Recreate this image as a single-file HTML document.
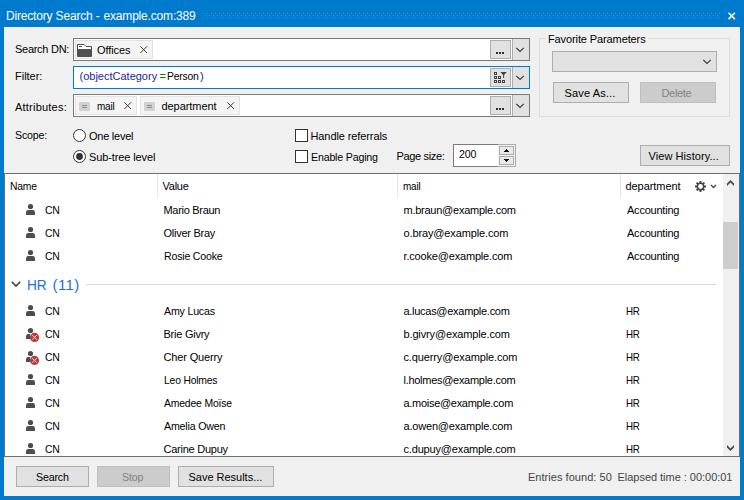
<!DOCTYPE html>
<html><head><meta charset="utf-8"><title>Directory Search - example.com:389</title>
<style>
html,body{margin:0;padding:0;}
body{width:744px;height:500px;overflow:hidden;background:#007acc;position:relative;font-family:"Liberation Sans",sans-serif;font-size:11px;color:#000;}
div,svg{position:absolute;box-sizing:border-box;}
.t{white-space:pre;line-height:13px;height:13px;}
.ic{overflow:visible}
#dots{left:203px;top:13px;width:517px;height:5px;}
#content{left:4px;top:27px;width:736px;height:469px;background:#f0f0f0;}
.box{background:#fff;border:1px solid #7a7a7a;}
.btn{background:#e1e1e1;border:1px solid #adadad;}
.btn.dis{background:#cccccc;border-color:#bfbfbf;color:#838383;}
.tok{background:#f4f4f4;border:1px solid #e2e2e2;height:19px;top:1px;}
.dd{background:#e1e1e1;border-left:1px solid #adadad;width:17px;height:21px;top:0;right:0;}
.sep{width:1px;background:#e5e5e5;top:0;height:24px;}
</style></head><body>
<div class="t " style="left:6px;top:9px;letter-spacing:-0.176px;font-size:12px;line-height:15px;height:15px;color:#fff;">Directory Search -</div>
<div class="t " style="left:103.5px;top:9px;letter-spacing:-0.179px;font-size:12px;line-height:15px;height:15px;color:#fff;">example.com:389</div>
<svg id="dots" width="517" height="5" viewBox="0 0 517 5"><defs><pattern id="dp" x="0" y="0" width="4" height="4" patternUnits="userSpaceOnUse"><rect x="0" y="0" width="1" height="1" fill="#00aaff"/><rect x="2" y="2" width="1" height="1" fill="#00aaff"/></pattern></defs><rect x="0" y="0" width="517" height="5" fill="url(#dp)"/></svg>
<svg style="left:728px;top:12px" width="8" height="8" viewBox="0 0 8 8"><path d="M0.5 0.7L6.9 7.1M6.9 0.7L0.5 7.1" stroke="#fff" stroke-width="1.5" fill="none"/></svg>
<div id="content">
<div class="t " style="left:11px;top:16px;letter-spacing:-0.278px;">Search DN:</div>
<div class="t " style="left:11px;top:43px;letter-spacing:-0.017px;">Filter:</div>
<div class="t " style="left:11px;top:74px;letter-spacing:0.22px;">Attributes:</div>
<div class="t " style="left:11px;top:102px;letter-spacing:-0.2px;transform:scaleX(0.967);transform-origin:0px 0;">Scope:</div>

<!-- Search DN box -->
<div class="box" style="left:69px;top:11px;width:457px;height:23px;">
  <div class="tok" style="left:1px;width:78px;">
    <svg style="left:1px;top:3px" width="16" height="14" viewBox="0 0 16 14"><path d="M0.5 0.5H7L9 2.5H14.5V12.5H0.5Z" fill="#fff" stroke="#505050" stroke-width="1"/><rect x="1" y="5" width="13" height="7.5" fill="#505050"/><rect x="2" y="2" width="3" height="1" fill="#505050"/></svg>
    <div class="t " style="left:21px;top:3px;letter-spacing:-0.083px;">Offices</div>
    <svg style="left:64px;top:5px" width="8" height="8" viewBox="0 0 8 8"><path d="M0.3 0.3L7 7M7 0.3L0.3 7" stroke="#3c3c3c" stroke-width="1" fill="none"/></svg>
  </div>
  <div class="btn" style="left:416px;top:1px;width:21px;height:19px;"><svg style="left:5px;top:11px" width="8" height="2"><rect x="0" y="0" width="2" height="2" fill="#2b2b2b"/><rect x="3" y="0" width="2" height="2" fill="#2b2b2b"/><rect x="6" y="0" width="2" height="2" fill="#2b2b2b"/></svg></div>
  <div class="dd"><svg style="left:3px;top:8px" width="10" height="6" viewBox="0 0 10 6"><path d="M0.3 0.9L4.05 4.5L7.8 0.9" stroke="#3a3a3a" stroke-width="1.15" fill="none"/></svg></div>
</div>

<!-- Filter box -->
<div class="box" style="left:69px;top:39px;width:457px;height:23px;border-color:#0078d7;">
  <div class="t " style="left:5.5px;top:3px;color:#2222aa;">(objectCategory</div>
  <div class="t " style="left:85.5px;top:3px;color:#008000;">=</div>
  <div class="t " style="left:93px;top:3px;letter-spacing:-0.2px;transform:scaleX(0.938);transform-origin:0px 0;">Person</div>
  <div class="t " style="left:126px;top:3px;color:#2222aa;">)</div>
  <div class="btn" style="left:416px;top:1px;width:21px;height:19px;"><svg style="left:3px;top:3px" width="14" height="12" viewBox="0 0 14 12"><g fill="none" stroke="#404040" stroke-width="1" shape-rendering="crispEdges"><rect x="0.5" y="0.5" width="2" height="2"/><rect x="0.5" y="4.5" width="2" height="2"/><rect x="4.5" y="4.5" width="2" height="2"/><rect x="0.5" y="8.5" width="2" height="2"/><rect x="4.5" y="8.5" width="2" height="2"/><rect x="8.5" y="8.5" width="2" height="2"/></g><path d="M6.5 0H12.7L10.1 3V6H9.1V3Z" fill="#404040"/></svg></div>
  <div class="dd"><svg style="left:3px;top:8px" width="10" height="6" viewBox="0 0 10 6"><path d="M0.3 0.9L4.05 4.5L7.8 0.9" stroke="#3a3a3a" stroke-width="1.15" fill="none"/></svg></div>
</div>

<!-- Attributes box -->
<div class="box" style="left:69px;top:67px;width:457px;height:23px;">
  <div class="tok" style="left:1px;width:62px;">
    <svg style="left:3px;top:5px" width="11" height="9" viewBox="0 0 11 9"><rect x="0" y="0" width="11" height="9" rx="1" fill="#d2d2d2"/><path d="M3 3.5H8M3 5.5H8" stroke="#8c8c8c" stroke-width="1"/></svg>
    <div class="t " style="left:21px;top:3px;letter-spacing:-0.2px;transform:scaleX(0.902);transform-origin:0px 0;">mail</div>
    <svg style="left:48px;top:5px" width="8" height="8" viewBox="0 0 8 8"><path d="M0.3 0.3L7 7M7 0.3L0.3 7" stroke="#3c3c3c" stroke-width="1" fill="none"/></svg>
  </div>
  <div class="tok" style="left:66px;width:100px;">
    <svg style="left:3px;top:5px" width="11" height="9" viewBox="0 0 11 9"><rect x="0" y="0" width="11" height="9" rx="1" fill="#d2d2d2"/><path d="M3 3.5H8M3 5.5H8" stroke="#8c8c8c" stroke-width="1"/></svg>
    <div class="t " style="left:20.5px;top:3px;letter-spacing:-0.056px;">department</div>
    <svg style="left:86px;top:5px" width="8" height="8" viewBox="0 0 8 8"><path d="M0.3 0.3L7 7M7 0.3L0.3 7" stroke="#3c3c3c" stroke-width="1" fill="none"/></svg>
  </div>
  <div class="btn" style="left:416px;top:1px;width:21px;height:19px;"><svg style="left:5px;top:11px" width="8" height="2"><rect x="0" y="0" width="2" height="2" fill="#2b2b2b"/><rect x="3" y="0" width="2" height="2" fill="#2b2b2b"/><rect x="6" y="0" width="2" height="2" fill="#2b2b2b"/></svg></div>
  <div class="dd"><svg style="left:3px;top:8px" width="10" height="6" viewBox="0 0 10 6"><path d="M0.3 0.9L4.05 4.5L7.8 0.9" stroke="#3a3a3a" stroke-width="1.15" fill="none"/></svg></div>
</div>

<!-- Favorite parameters group -->
<div style="left:535px;top:11px;width:191px;height:79px;border:1px solid #dcdcdc;"></div>
<div style="left:542px;top:8px;width:102px;height:8px;background:#f0f0f0;"></div>
<div class="t " style="left:544px;top:6px;letter-spacing:-0.111px;">Favorite Parameters</div>
<div class="btn" style="left:548px;top:24px;width:165px;height:21px;"><svg style="left:150px;top:7px" width="10" height="6" viewBox="0 0 10 6"><path d="M0.3 0.9L4.05 4.5L7.8 0.9" stroke="#3a3a3a" stroke-width="1.15" fill="none"/></svg></div>
<div class="btn" style="left:549px;top:55px;width:76px;height:21px;"><div class="t " style="left:10.5px;top:4px;letter-spacing:0.144px;">Save As...</div></div>
<div class="btn dis" style="left:636px;top:55px;width:76px;height:21px;"><div class="t " style="left:20.5px;top:4px;letter-spacing:-0.32px;">Delete</div></div>

<!-- Scope radios -->
<svg style="left:69px;top:102px" width="13" height="13" viewBox="0 0 13 13"><circle cx="6.5" cy="6.5" r="6" fill="#fff" stroke="#333" stroke-width="1"/></svg>
<div class="t " style="left:85px;top:103px;letter-spacing:-0.25px;">One level</div>
<svg style="left:69px;top:123px" width="13" height="13" viewBox="0 0 13 13"><circle cx="6.5" cy="6.5" r="6" fill="#fff" stroke="#333" stroke-width="1"/><circle cx="6.5" cy="6.5" r="3.4" fill="#333"/></svg>
<div class="t " style="left:85px;top:124px;letter-spacing:-0.108px;">Sub-tree level</div>

<!-- Checkboxes -->
<div style="left:291px;top:102px;width:13px;height:13px;background:#fff;border:1px solid #333;"></div>
<div class="t " style="left:306.5px;top:103px;letter-spacing:-0.1px;">Handle referrals</div>
<div style="left:291px;top:123px;width:13px;height:13px;background:#fff;border:1px solid #333;"></div>
<div class="t " style="left:306.5px;top:124px;letter-spacing:-0.2px;transform:scaleX(0.969);transform-origin:0px 0;">Enable Paging</div>
<div class="t " style="left:392.5px;top:123px;letter-spacing:-0.333px;">Page size:</div>
<div class="box" style="left:449px;top:117px;width:45px;height:23px;border-right:none;">
  <div class="t " style="left:5px;top:3px;letter-spacing:-0.2px;transform:scaleX(0.966);transform-origin:0px 0;">200</div>
</div>
<div style="left:494px;top:117px;width:18px;height:23px;background:#f0f0f0;border:1px solid #adadad;border-left:none;">
  <div class="btn" style="left:1px;top:1px;width:15px;height:9px;background:#e9e9e9;"><svg style="left:4px;top:2px" width="5" height="3" viewBox="0 0 5 3" shape-rendering="crispEdges"><path d="M2 0H3V1H4V2H5V3H0V2H1V1H2Z" fill="#111"/></svg></div>
  <div class="btn" style="left:1px;top:11px;width:15px;height:9px;background:#e9e9e9;"><svg style="left:4px;top:2px" width="5" height="3" viewBox="0 0 5 3" shape-rendering="crispEdges"><path d="M0 0H5V1H4V2H3V3H2V2H1V1H0Z" fill="#111"/></svg></div>
</div>
<div class="btn" style="left:636px;top:118px;width:90px;height:21px;"><div class="t " style="left:7.5px;top:4px;letter-spacing:0.071px;">View History...</div></div>

<!-- Grid -->
<div id="grid" style="left:0px;top:146px;width:736px;height:284px;background:#fff;border:1px solid #6e6e6e;overflow:hidden;">
  <div class="t " style="left:4.5px;top:6px;letter-spacing:-0.2px;transform:scaleX(0.94);transform-origin:0px 0;">Name</div>
  <div class="t " style="left:157.5px;top:6px;letter-spacing:-0.25px;">Value</div>
  <div class="t " style="left:398px;top:6px;letter-spacing:-0.2px;transform:scaleX(0.902);transform-origin:0px 0;">mail</div>
  <div class="t " style="left:620.5px;top:6px;letter-spacing:-0.056px;">department</div>
  <div class="sep" style="left:152px"></div>
  <div class="sep" style="left:392px"></div>
  <div class="sep" style="left:615px"></div>
  <svg style="left:690px;top:7px" width="11" height="11" viewBox="-5.5 -5.5 11 11"><g fill="#444"><circle r="3.9"/><rect x="-1" y="-5.5" width="2" height="11"/><rect x="-1" y="-5.5" width="2" height="11" transform="rotate(45)"/><rect x="-1" y="-5.5" width="2" height="11" transform="rotate(90)"/><rect x="-1" y="-5.5" width="2" height="11" transform="rotate(135)"/></g><circle r="2.4" fill="#fff"/></svg>
  <svg class="ic" style="left:706px;top:11px" width="5" height="3" viewBox="0 0 5 3"><path d="M0.5 0.5L2.5 2.5L4.5 0.5" stroke="#444" stroke-width="1.3" stroke-linecap="square" fill="none"/></svg>
  <svg style="left:6px;top:107px" width="10" height="7" viewBox="0 0 10 7"><path d="M0.8 0.8L5 5L9.2 0.8" stroke="#404040" stroke-width="1.6" fill="none"/></svg>
  <div class="t " style="left:22px;top:102px;letter-spacing:-0.2px;transform:scaleX(0.909);transform-origin:1px 0;font-size:15px;line-height:18px;height:18px;color:#1e6fd9;">HR</div>
  <div class="t " style="left:47.5px;top:102px;letter-spacing:0.4px;font-size:15px;line-height:18px;height:18px;color:#1e6fd9;">(11)</div>
  <div style="left:81px;top:110px;width:630px;height:1px;background:#d2daee;"></div>
<svg class="ic" style="left:19px;top:28px" width="16" height="16" viewBox="0 0 16 16"><circle cx="6.5" cy="4.5" r="2.6" fill="#4d4d4d"/><path d="M2 13V10.4Q2 8 4.4 8H8.6Q11 8 11 10.4V13Z" fill="#4d4d4d"/></svg>
<div class="t " style="left:39.5px;top:30px;letter-spacing:-0.2px;transform:scaleX(0.946);transform-origin:0px 0;">CN</div>
<div class="t " style="left:158.5px;top:30px;letter-spacing:-0.3px;">Mario Braun</div>
<div class="t " style="left:398.5px;top:30px;letter-spacing:-0.25px;">m.braun@example.com</div>
<div class="t " style="left:622px;top:30px;letter-spacing:-0.222px;">Accounting</div>
<svg class="ic" style="left:19px;top:51px" width="16" height="16" viewBox="0 0 16 16"><circle cx="6.5" cy="4.5" r="2.6" fill="#4d4d4d"/><path d="M2 13V10.4Q2 8 4.4 8H8.6Q11 8 11 10.4V13Z" fill="#4d4d4d"/></svg>
<div class="t " style="left:39.5px;top:53px;letter-spacing:-0.2px;transform:scaleX(0.946);transform-origin:0px 0;">CN</div>
<div class="t " style="left:158.5px;top:53px;letter-spacing:-0.26px;">Oliver Bray</div>
<div class="t " style="left:398.5px;top:53px;letter-spacing:-0.129px;">o.bray@example.com</div>
<div class="t " style="left:622px;top:53px;letter-spacing:-0.222px;">Accounting</div>
<svg class="ic" style="left:19px;top:74px" width="16" height="16" viewBox="0 0 16 16"><circle cx="6.5" cy="4.5" r="2.6" fill="#4d4d4d"/><path d="M2 13V10.4Q2 8 4.4 8H8.6Q11 8 11 10.4V13Z" fill="#4d4d4d"/></svg>
<div class="t " style="left:39.5px;top:76px;letter-spacing:-0.2px;transform:scaleX(0.946);transform-origin:0px 0;">CN</div>
<div class="t " style="left:158.5px;top:76px;letter-spacing:-0.2px;transform:scaleX(0.961);transform-origin:0px 0;">Rosie Cooke</div>
<div class="t " style="left:398.5px;top:76px;letter-spacing:-0.178px;">r.cooke@example.com</div>
<div class="t " style="left:622px;top:76px;letter-spacing:-0.222px;">Accounting</div>
<svg class="ic" style="left:19px;top:129px" width="16" height="16" viewBox="0 0 16 16"><circle cx="6.5" cy="4.5" r="2.6" fill="#4d4d4d"/><path d="M2 13V10.4Q2 8 4.4 8H8.6Q11 8 11 10.4V13Z" fill="#4d4d4d"/></svg>
<div class="t " style="left:39.5px;top:131px;letter-spacing:-0.2px;transform:scaleX(0.946);transform-origin:0px 0;">CN</div>
<div class="t " style="left:158.5px;top:131px;letter-spacing:-0.2px;transform:scaleX(0.966);transform-origin:0px 0;">Amy Lucas</div>
<div class="t " style="left:398.5px;top:131px;letter-spacing:-0.283px;">a.lucas@example.com</div>
<div class="t " style="left:621px;top:131px;letter-spacing:-0.2px;transform:scaleX(0.886);transform-origin:0px 0;">HR</div>
<svg class="ic" style="left:19px;top:152px" width="16" height="16" viewBox="0 0 16 16"><circle cx="6.5" cy="4.5" r="2.6" fill="#4d4d4d"/><path d="M2 13V10.4Q2 8 4.4 8H6V13Z" fill="#4d4d4d"/><circle cx="10.5" cy="11.4" r="4.6" fill="#bb3a3a"/><path d="M8.3 9.2L12.7 13.6M12.7 9.2L8.3 13.6" stroke="#fff" stroke-width="0.9" fill="none"/></svg>
<div class="t " style="left:39.5px;top:154px;letter-spacing:-0.2px;transform:scaleX(0.946);transform-origin:0px 0;">CN</div>
<div class="t " style="left:158.5px;top:154px;letter-spacing:-0.244px;">Brie Givry</div>
<div class="t " style="left:398.5px;top:154px;letter-spacing:-0.139px;">b.givry@example.com</div>
<div class="t " style="left:621px;top:154px;letter-spacing:-0.2px;transform:scaleX(0.886);transform-origin:0px 0;">HR</div>
<svg class="ic" style="left:19px;top:175px" width="16" height="16" viewBox="0 0 16 16"><circle cx="6.5" cy="4.5" r="2.6" fill="#4d4d4d"/><path d="M2 13V10.4Q2 8 4.4 8H6V13Z" fill="#4d4d4d"/><circle cx="10.5" cy="11.4" r="4.6" fill="#bb3a3a"/><path d="M8.3 9.2L12.7 13.6M12.7 9.2L8.3 13.6" stroke="#fff" stroke-width="0.9" fill="none"/></svg>
<div class="t " style="left:39.5px;top:177px;letter-spacing:-0.2px;transform:scaleX(0.946);transform-origin:0px 0;">CN</div>
<div class="t " style="left:158.5px;top:177px;letter-spacing:-0.15px;">Cher Querry</div>
<div class="t " style="left:398.5px;top:177px;letter-spacing:-0.126px;">c.querry@example.com</div>
<div class="t " style="left:621px;top:177px;letter-spacing:-0.2px;transform:scaleX(0.886);transform-origin:0px 0;">HR</div>
<svg class="ic" style="left:19px;top:198px" width="16" height="16" viewBox="0 0 16 16"><circle cx="6.5" cy="4.5" r="2.6" fill="#4d4d4d"/><path d="M2 13V10.4Q2 8 4.4 8H8.6Q11 8 11 10.4V13Z" fill="#4d4d4d"/></svg>
<div class="t " style="left:39.5px;top:200px;letter-spacing:-0.2px;transform:scaleX(0.946);transform-origin:0px 0;">CN</div>
<div class="t " style="left:158.5px;top:200px;letter-spacing:-0.2px;transform:scaleX(0.941);transform-origin:0px 0;">Leo Holmes</div>
<div class="t " style="left:398.5px;top:200px;letter-spacing:-0.284px;">l.holmes@example.com</div>
<div class="t " style="left:621px;top:200px;letter-spacing:-0.2px;transform:scaleX(0.886);transform-origin:0px 0;">HR</div>
<svg class="ic" style="left:19px;top:221px" width="16" height="16" viewBox="0 0 16 16"><circle cx="6.5" cy="4.5" r="2.6" fill="#4d4d4d"/><path d="M2 13V10.4Q2 8 4.4 8H8.6Q11 8 11 10.4V13Z" fill="#4d4d4d"/></svg>
<div class="t " style="left:39.5px;top:223px;letter-spacing:-0.2px;transform:scaleX(0.946);transform-origin:0px 0;">CN</div>
<div class="t " style="left:158.5px;top:223px;letter-spacing:-0.2px;transform:scaleX(0.948);transform-origin:0px 0;">Amedee Moïse</div>
<div class="t " style="left:398.5px;top:223px;letter-spacing:-0.294px;">a.moise@example.com</div>
<div class="t " style="left:621px;top:223px;letter-spacing:-0.2px;transform:scaleX(0.886);transform-origin:0px 0;">HR</div>
<svg class="ic" style="left:19px;top:244px" width="16" height="16" viewBox="0 0 16 16"><circle cx="6.5" cy="4.5" r="2.6" fill="#4d4d4d"/><path d="M2 13V10.4Q2 8 4.4 8H8.6Q11 8 11 10.4V13Z" fill="#4d4d4d"/></svg>
<div class="t " style="left:39.5px;top:246px;letter-spacing:-0.2px;transform:scaleX(0.946);transform-origin:0px 0;">CN</div>
<div class="t " style="left:158.5px;top:246px;letter-spacing:-0.2px;transform:scaleX(0.97);transform-origin:0px 0;">Amelia Owen</div>
<div class="t " style="left:398.5px;top:246px;letter-spacing:-0.188px;">a.owen@example.com</div>
<div class="t " style="left:621px;top:246px;letter-spacing:-0.2px;transform:scaleX(0.886);transform-origin:0px 0;">HR</div>
<svg class="ic" style="left:19px;top:267px" width="16" height="16" viewBox="0 0 16 16"><circle cx="6.5" cy="4.5" r="2.6" fill="#4d4d4d"/><path d="M2 13V10.4Q2 8 4.4 8H8.6Q11 8 11 10.4V13Z" fill="#4d4d4d"/></svg>
<div class="t " style="left:39.5px;top:269px;letter-spacing:-0.2px;transform:scaleX(0.946);transform-origin:0px 0;">CN</div>
<div class="t " style="left:158.5px;top:269px;letter-spacing:-0.245px;">Carine Dupuy</div>
<div class="t " style="left:398.5px;top:269px;letter-spacing:-0.167px;">c.dupuy@example.com</div>
<div class="t " style="left:621px;top:269px;letter-spacing:-0.2px;transform:scaleX(0.886);transform-origin:0px 0;">HR</div>
  <div style="left:718px;top:0;width:16px;height:282px;background:#f0f0f0;"></div>
  <div style="left:718px;top:48px;width:15px;height:47px;background:#cdcdcd;"></div>
  <svg style="left:722px;top:6px" width="7" height="6" viewBox="0 0 7 6"><path d="M3.5 0L7 3.5V6L3.5 2.5L0 6V3.5Z" fill="#484848"/></svg>
  <svg style="left:722px;top:271px" width="7" height="6" viewBox="0 0 7 6"><path d="M0 0L3.5 3.5L7 0V2.5L3.5 6L0 2.5Z" fill="#484848"/></svg>
</div>

<!-- bottom bar -->
<div class="btn" style="left:12px;top:439px;width:73px;height:21px;"><div class="t " style="left:18.5px;top:4px;letter-spacing:-0.2px;transform:scaleX(0.971);transform-origin:0px 0;">Search</div></div>
<div class="btn dis" style="left:93px;top:439px;width:73px;height:21px;"><div class="t " style="left:24px;top:4px;letter-spacing:-0.2px;transform:scaleX(0.969);transform-origin:0px 0;">Stop</div></div>
<div class="btn" style="left:174px;top:439px;width:96px;height:21px;"><div class="t " style="left:9.5px;top:4px;letter-spacing:-0.014px;">Save Results...</div></div>
<div class="t " style="left:524px;top:444px;letter-spacing:0.037px;color:#444;">Entries found: 50</div>
<div class="t " style="left:613.5px;top:444px;letter-spacing:-0.027px;color:#444;">Elapsed time : 00:00:01</div>
</div>
</body></html>
